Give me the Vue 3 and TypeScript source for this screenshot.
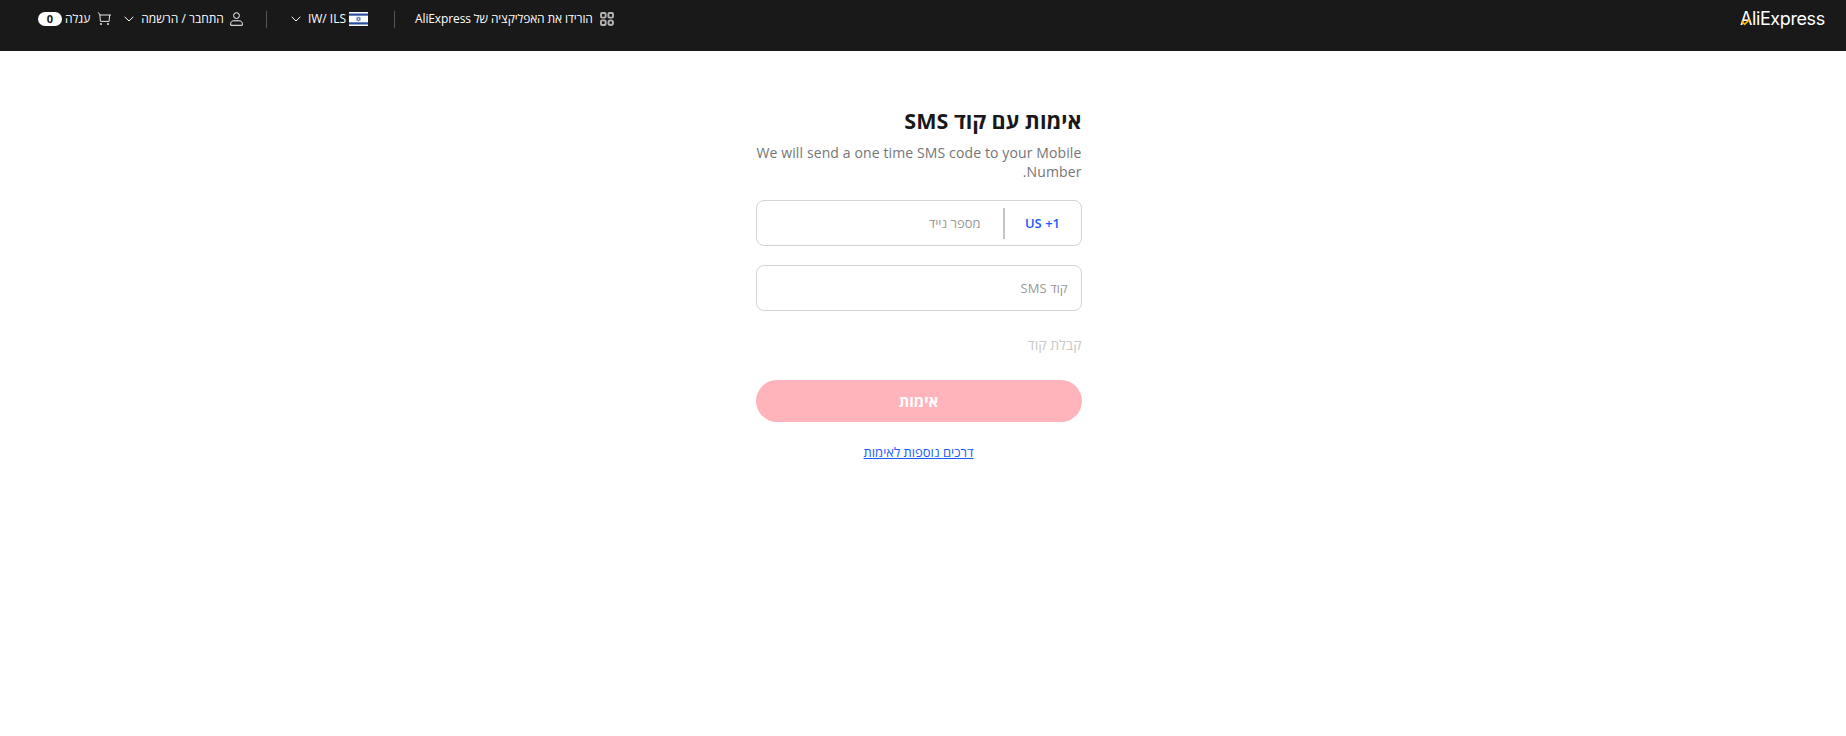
<script setup lang="ts">
const navTitle: string = 'הורידו את האפליקציה של AliExpress'
</script>

<template>
  <div class="page" dir="rtl">
    <header class="topbar">
      <div class="logo" dir="ltr">
        <span>AliExpress</span>
        <svg class="logo-check" viewBox="0 0 14 12" width="12" height="8"><path d="M1 5l4 4.4L12.5 2" fill="none" stroke="#f7b500" stroke-width="2.6"/></svg>
      </div>
      <nav class="nav">
        <a class="nav-item">
          <svg class="qr" viewBox="0 0 14 14" width="14" height="14">
            <g fill="none" stroke="#b4b4b4" stroke-width="1.9">
              <rect x="1" y="1" width="4.6" height="4.6" rx="1"/><rect x="8.4" y="1" width="4.6" height="4.6" rx="1"/>
              <rect x="1" y="8.4" width="4.6" height="4.6" rx="1"/><rect x="8.4" y="8.4" width="4.6" height="4.6" rx="2.3"/>
            </g>
          </svg>
          <span class="tight">{{ navTitle }}</span>
        </a>
        <i class="divider"></i>
        <a class="nav-item">
          <svg class="flag" viewBox="0 0 19 14" width="19" height="14">
            <rect width="19" height="14" fill="#fff"/>
            <rect y="1.5" width="19" height="2.2" fill="#2a4f9e"/><rect y="10.3" width="19" height="2.2" fill="#2a4f9e"/>
            <path d="M9.5 4.8l2 3.4h-4zM9.5 9.2l-2-3.4h4z" fill="none" stroke="#2a4f9e" stroke-width=".6"/>
          </svg>
          <span dir="ltr">IW/ ILS</span>
          <svg class="chev" viewBox="0 0 10 6" width="10" height="6"><path d="M.7.8L5 5l4.3-4.2" fill="none" stroke="#fff" stroke-width="1"/></svg>
        </a>
        <i class="divider wide"></i>
        <a class="nav-item">
          <svg class="user" viewBox="0 0 13 14" width="13" height="14">
            <g fill="none" stroke="#fff" stroke-width="1"><circle cx="6.5" cy="3.6" r="2.9"/><path d="M3.6 8.8h5.8c1.6 0 2.9 1.3 2.9 2.6v1.9H.7v-1.9c0-1.3 1.3-2.6 2.9-2.6z"/></g>
          </svg>
          <span>התחבר / הרשמה</span>
          <svg class="chev" viewBox="0 0 10 6" width="10" height="6"><path d="M.7.8L5 5l4.3-4.2" fill="none" stroke="#fff" stroke-width="1"/></svg>
        </a>
        <a class="nav-item cart">
          <svg class="cart-icon" viewBox="0 0 14 14" width="14" height="14">
            <g fill="none" stroke="#e6e6e6" stroke-width="1"><path d="M14 3H2.6M12.6 3l-.5 6.4H3.4L2.8 2 .8.5"/></g>
            <circle cx="4" cy="12" r="1" fill="#e6e6e6"/><circle cx="11" cy="12" r="1" fill="#e6e6e6"/>
          </svg>
          <span>עגלה</span>
          <b class="badge">0</b>
        </a>
      </nav>
    </header>

    <main class="main">
      <section class="form">
        <h1 class="title">אימות עם קוד SMS</h1>
        <p class="sub">We will send a one time SMS code to your Mobile Number.</p>
        <div class="field phone">
          <span class="code" dir="ltr">US +1</span>
          <i class="sep"></i>
          <span class="ph">מספר נייד</span>
        </div>
        <div class="field sms">
          <span class="ph">קוד SMS</span>
        </div>
        <div class="get">קבלת קוד</div>
        <button class="verify" type="button">אימות</button>
        <a class="more">דרכים נוספות לאימות</a>
      </section>
    </main>
  </div>
</template>

<style>
html, body { margin: 0; background: #fff; }
</style>

<style scoped>
.page {
  width: 1846px;
  height: 736px;
  background: #fff;
  font-family: "Open Sans", "Noto Sans", sans-serif;
  overflow: hidden;
}
.topbar {
  height: 51px;
  background: #191919;
  display: flex;
  justify-content: space-between;
  align-items: flex-start;
  padding: 0 21px 0 38px;
  color: #fff;
  box-sizing: border-box;
}
.logo {
  position: relative;
  width: 85px;
  height: 38px;
  font-family: "Inter", sans-serif;
  font-size: 18px;
  line-height: 38px;
  letter-spacing: -0.4px;
  font-weight: 400;
  color: #fff;
  white-space: nowrap;
}
.logo-check { position: absolute; left: 0; top: 18px; }
.nav { display: flex; align-items: center; height: 38px; font-size: 12px; }
.nav-item { display: flex; align-items: center; color: #fff; white-space: nowrap; }
.nav-item span { line-height: 38px; }
.tight { letter-spacing: -0.12px; }
.qr { margin-left: 7px; }
.flag { margin-left: 3px; }
.chev { margin-right: 7px; }
.user { margin-left: 6px; }
.divider { width: 1px; height: 17px; background: #555; margin: 0 20px 0 26px; }
.divider.wide { margin: 0 24px 0 23px; }
.cart { margin-right: 13px; }
.cart-icon { margin-left: 7px; }
.badge {
  width: 24px;
  height: 14px;
  margin-right: 3px;
  border-radius: 7px;
  background: #fff;
  color: #191919;
  font-size: 11px;
  font-weight: 700;
  line-height: 14px;
  text-align: center;
}
.main { display: flex; justify-content: center; }
.form { width: 326px; margin-right: 9px; padding-top: 54px; }
.title {
  margin: 0;
  font-size: 21.5px;
  line-height: 32px;
  font-weight: 700;
  color: #191919;
}
.sub {
  margin: 6px 0 19px;
  font-size: 14px;
  line-height: 19px;
  letter-spacing: 0.12px;
  color: #757575;
}
.field {
  height: 46px;
  box-sizing: border-box;
  border: 1px solid #d3d3d3;
  border-radius: 8px;
  display: flex;
  align-items: center;
  background: #fff;
}
.phone { margin-bottom: 19px; }
.code {
  width: 76px;
  text-align: center;
  font-size: 13px;
  font-weight: 600;
  color: #1a5cff;
}
.sep { width: 2px; height: 31px; background: #c4c4c4; }
.phone .ph { margin-right: 22px; }
.sms .ph { margin-right: 13px; }
.ph { font-size: 13px; color: #999; }
.get {
  margin-top: 24px;
  font-size: 14px;
  line-height: 20px;
  color: #c9c9c9;
}
.verify {
  display: block;
  width: 100%;
  height: 42px;
  margin-top: 25px;
  border: 0;
  border-radius: 21px;
  background: #ffb3ba;
  color: #fff;
  font-family: inherit;
  font-size: 15px;
  font-weight: 700;
}
.more {
  display: block;
  margin-top: 21px;
  text-align: center;
  font-size: 13px;
  line-height: 18px;
  color: #1a5cff;
  text-decoration: underline;
}
</style>
